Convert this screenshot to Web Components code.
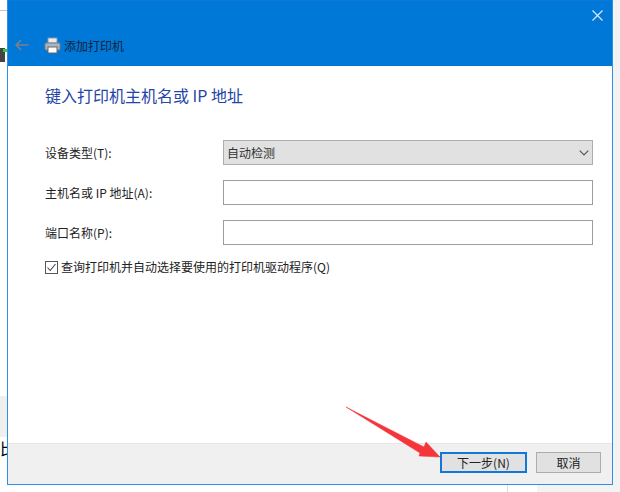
<!DOCTYPE html>
<html><head><meta charset="utf-8">
<style>html,body{margin:0;height:100%}body{width:620px;height:492px;overflow:hidden;background:#fff;position:relative;font-family:"Liberation Sans","Noto Sans CJK SC",sans-serif}</style>
</head><body>
<desk-top></desk-top>
<script>
const F='"Noto Sans CJK SC","Liberation Sans",sans-serif';
customElements.define('desk-top',class extends HTMLElement{constructor(){super();this.attachShadow({mode:'open'}).innerHTML=`<style>
:host{display:block;position:absolute;inset:0;overflow:hidden;background:#fff}
.a{position:absolute}
</style>
<div class="a" style="left:0;top:10px;width:7px;height:1px;background:#c4c4c4"></div>
<div class="a" style="left:0;top:396px;width:7px;height:41px;background:#efefef"></div>
<svg class="a" style="left:0;top:46px" width="7" height="18"><rect x="0" y="2" width="5" height="14" fill="#444"/><rect x="3" y="3" width="4" height="3" fill="#3c3"/></svg>
<div class="a" style="left:0;top:436px;width:7px;height:10px;font:10px/10px ${F};overflow:hidden;color:#555;white-space:nowrap;direction:rtl">比</div>
<div class="a" style="left:613px;top:0;width:7px;height:492px;background:#f3f3f3"></div>
<div class="a" style="left:507px;top:485px;width:1px;height:7px;background:#ddd"></div>
<div class="a" style="left:537px;top:485px;width:76px;height:7px;background:#f3f3f3"></div>
<wizard-window class="a" style="left:7px;top:0"></wizard-window>`}});
customElements.define('wizard-window',class extends HTMLElement{constructor(){super();this.attachShadow({mode:'open'}).innerHTML=`<style>
:host{display:flex;flex-direction:column;position:absolute;box-sizing:border-box;width:606px;height:485px;border:1px solid #2f8fe6;border-top-color:#0f78d8;background:#fff;font:12px ${F};color:#222}
main{flex:1;padding:18px 19px 0 20px;display:flex;flex-direction:column}
h1{margin:0 0 34px;padding-left:17px;font:400 16px/22px ${F};color:#2444a8}
</style>
<title-bar></title-bar>
<main>
<h1>键入打印机主机名或 IP 地址</h1>
<form-row label="设备类型(T):"><select-box>自动检测</select-box></form-row>
<form-row label="主机名或 IP 地址(A):"><text-box></text-box></form-row>
<form-row label="端口名称(P):"><text-box></text-box></form-row>
<check-row>查询打印机并自动选择要使用的打印机驱动程序(Q)</check-row>
</main>
<foot-bar></foot-bar>
<swoosh-arrow></swoosh-arrow>`}});
customElements.define('title-bar',class extends HTMLElement{constructor(){super();this.attachShadow({mode:'open'}).innerHTML=`<style>
:host{display:flex;align-items:flex-end;height:65px;background:#0078d7;flex:none;position:relative;box-sizing:border-box;padding:0 0 12px 7px}
.back{width:14px;height:12px;margin-bottom:3px;display:block}
.pr{width:17px;height:17px;margin-left:15px;display:block}
span{font:12px/17px ${F};color:#14233c;margin-left:3px}
.x{position:absolute;right:9px;top:9px;width:11px;height:11px}
</style>
<svg class="back" viewBox="0 0 14 12"><path d="M6 1 1.2 6 6 11M1.5 6H13.5" fill="none" stroke="#7b7f8a" stroke-width="1.7"/></svg>
<svg class="pr" viewBox="0 0 17 17"><rect x="4" y="1" width="9" height="5" fill="#e8edf2" stroke="#8c98a6"/><rect x="1" y="6" width="15" height="7" rx="1" fill="#aab4be" stroke="#74808c"/><rect x="4" y="10" width="9" height="6" fill="#fff" stroke="#5e6a76"/></svg>
<span>添加打印机</span>
<svg class="x" viewBox="0 0 11 11"><path d="M.5.5 10.5 10.5M10.5.5 .5 10.5" stroke="#d8e9f8" stroke-width="1.2"/></svg>`}});
customElements.define('form-row',class extends HTMLElement{constructor(){super();this.attachShadow({mode:'open'}).innerHTML=`<style>
:host{display:flex;align-items:center;height:25px;margin-bottom:15px;padding-left:17px}
label{width:178px;flex:none;font:12px/25px ${F};color:#222}
</style><label></label><slot></slot>`;this.shadowRoot.querySelector('label').textContent=this.getAttribute('label')}});
customElements.define('select-box',class extends HTMLElement{constructor(){super();this.attachShadow({mode:'open'}).innerHTML=`<style>
:host{display:flex;align-items:center;justify-content:space-between;box-sizing:border-box;width:370px;height:25px;background:#e1e1e1;border:1px solid #adadad;padding:0 3px 0 3px;font:12px ${F};color:#333}
</style><slot></slot><svg width="10" height="6" viewBox="0 0 10 6"><path d="M.7.7 5 5 9.3.7" fill="none" stroke="#555" stroke-width="1.2"/></svg>`}});
customElements.define('text-box',class extends HTMLElement{constructor(){super();this.attachShadow({mode:'open'}).innerHTML=`<style>
:host{display:block;box-sizing:border-box;width:370px;height:25px;background:#fff;border:1px solid #9d9d9d}
</style>`}});
customElements.define('check-row',class extends HTMLElement{constructor(){super();this.attachShadow({mode:'open'}).innerHTML=`<style>
:host{display:flex;align-items:center;padding-left:17px;height:14px;font:12px/14px ${F};color:#222}
svg{width:13px;height:13px;margin-right:3px;flex:none}
</style><svg viewBox="0 0 13 13"><rect x=".5" y=".5" width="12" height="12" fill="#fff" stroke="#555"/><path d="M2.5 6.5 5.2 9.5 10.5 3" fill="none" stroke="#444" stroke-width="1.1"/></svg><slot></slot>`}});
customElements.define('foot-bar',class extends HTMLElement{constructor(){super();this.attachShadow({mode:'open'}).innerHTML=`<style>
:host{display:flex;justify-content:flex-end;align-items:flex-start;gap:9px;flex:none;box-sizing:border-box;height:41px;background:#f0f0f0;border-top:1px solid #e6e6e6;padding:8px 11px 0 0}
</style><wiz-btn primary>下一步(N)</wiz-btn><wiz-btn>取消</wiz-btn>`}});
customElements.define('wiz-btn',class extends HTMLElement{constructor(){super();this.attachShadow({mode:'open'}).innerHTML=`<style>
:host{display:flex;align-items:center;justify-content:center;box-sizing:border-box;width:65px;height:21px;background:#e1e1e1;border:1px solid #adadad;font:12px ${F};color:#222}
:host([primary]){width:87px;border:2px solid #0f78d8}
</style><slot></slot>`}});
customElements.define('swoosh-arrow',class extends HTMLElement{constructor(){super();this.attachShadow({mode:'open'}).innerHTML=`<style>
:host{position:absolute;left:330px;top:400px;width:120px;height:70px;display:block;pointer-events:none}
svg{display:block}
</style><svg width="120" height="70" viewBox="0 0 120 70"><path d="M8 6 86 46 88 41 102 56 81 55 82 52Z" fill="#f5343b" stroke="#f5343b" stroke-width=".5" stroke-linejoin="round"/></svg>`}});
</script>
</body></html>
